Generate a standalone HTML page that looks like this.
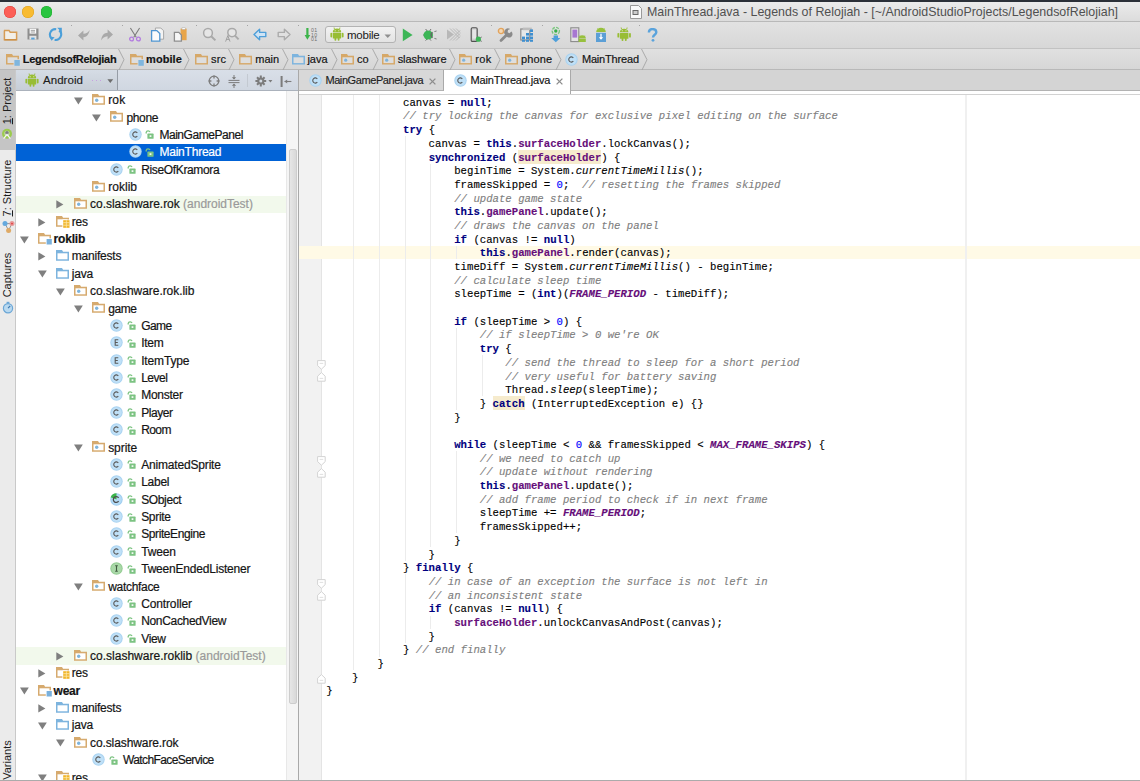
<!DOCTYPE html><html><head><meta charset="utf-8"><title>MainThread.java</title><style>
*{box-sizing:border-box}
html,body{margin:0;padding:0}
body{width:1140px;height:781px;overflow:hidden;position:relative;background:#e9e9e9;font-family:"Liberation Sans",sans-serif;color:#000}
.abs{position:absolute}
#band{left:0;top:0;width:1140px;height:2px;background:#2b3038}
#title{left:0;top:2px;width:1140px;height:20px;background:linear-gradient(#ebebeb,#dcdcdc);border-bottom:1px solid #b9b9b9}
#toolbar{left:0;top:22px;width:1140px;height:27px;background:linear-gradient(#e2e2e2,#d7d7d7);border-bottom:1px solid #c2c2c2}
#crumbs{left:0;top:49px;width:1140px;height:21px;background:linear-gradient(#e0e0e0,#d6d6d6);border-bottom:1px solid #b8b8b8}
.cr{position:absolute;top:0;height:20px;font-size:11px;line-height:20px;color:#1a1a1a;white-space:nowrap}
#strip{left:0;top:70px;width:16px;height:711px;background:#e6e6e6;border-right:1px solid #b5b5b5}
#proj{left:16px;top:70px;width:282px;height:711px;background:#fff}
#phead{left:16px;top:70px;width:282px;height:21px;background:linear-gradient(#d9dfe8,#d0d7e1);border-bottom:1px solid #abb2bc}
.tx{position:absolute;height:17.37px;font-size:12px;-webkit-text-stroke:0.2px currentColor;line-height:17.37px;white-space:nowrap;color:#141414}
.rbg{position:absolute;left:16px;width:270px;height:17.37px}
#vscroll{left:286px;top:91px;width:12px;height:690px;background:#f5f5f5;border-left:1px solid #e8e8e8}
#thumb{left:288.5px;top:149px;width:8.3px;height:554.5px;border-radius:2px;background:linear-gradient(90deg,#e6e6e6,#d9d9d9);border:1px solid #cdcdcd}
#sepline{left:298px;top:70px;width:1px;height:711px;background:#a9a9a9}
#editor{left:299px;top:70px;width:841px;height:711px;background:#fff}
#tabs{left:299px;top:70px;width:841px;height:21px;background:#d3d3d3;border-bottom:1px solid #b2b2b2}
.tab{position:absolute;top:70px;height:21px;font-size:11px;line-height:21px;color:#222;white-space:nowrap}
#gutter{left:299px;top:95px;width:23px;height:686px;background:#f2f2f2;border-right:1px solid #e4e4e4}
.cl{position:absolute;left:326.3px;height:13.67px;font-family:"Liberation Mono",monospace;font-size:10.675px;line-height:13.69px;white-space:pre;color:#000;-webkit-text-stroke:0.12px currentColor}
.k{color:#000080;font-weight:bold}
.f{color:#660e7a;font-weight:bold}
.sf{color:#660e7a;font-weight:bold;font-style:italic}
.n{color:#0000ff}
.c{color:#808080;font-style:italic}
.i{font-style:italic}
.hl{background:#f6ebcd;padding:2px 0 0 0}
.ig{position:absolute;width:1px;background:#ececec}
</style></head><body>
<div id="band" class="abs"></div>
<div id="title" class="abs"></div>
<div class="abs" style="left:4.35px;top:6.05px;width:11.5px;height:11.5px;border-radius:50%;background:#fc5f57;box-shadow:inset 0 0 0 0.5px #e0443e"></div>
<div class="abs" style="left:22.45px;top:6.05px;width:11.5px;height:11.5px;border-radius:50%;background:#f8bb31;box-shadow:inset 0 0 0 0.5px #dea123"></div>
<div class="abs" style="left:40.75px;top:6.05px;width:11.5px;height:11.5px;border-radius:50%;background:#29c540;box-shadow:inset 0 0 0 0.5px #1dad2b"></div>
<svg class="abs" style="left:630px;top:5px" width="12" height="14" viewBox="0 0 12 14" ><path d="M0.5 0.5h8l3 3v10h-11z" fill="#fafafa" stroke="#9a9a9a"/><rect x="2.5" y="5" width="6" height="5" fill="#6a6a6a"/><rect x="3.5" y="6" width="4" height="3" fill="#ccc"/></svg>
<div class="abs" id="f1" style="left:647px;top:3px;height:19px;line-height:19px;font-size:12.4px;color:#505050;white-space:nowrap;letter-spacing:0.011px;">MainThread.java - Legends of Relojiah - [~/AndroidStudioProjects/LegendsofRelojiah]</div>
<div id="toolbar" class="abs"></div>
<svg class="abs" style="left:3px;top:28px" width="15" height="13" viewBox="0 0 15 13" ><path d="M1.4 3.4V11.8H13.6V4.2H7.2L6 2.4H1.6Z" fill="#f2efe8" stroke="#d69c55" stroke-width="1.5"/><path d="M1.4 11.8H13.6" stroke="#c98c45" stroke-width="1.2"/></svg>
<svg class="abs" style="left:27px;top:28px" width="12" height="12" viewBox="0 0 12 12" ><path d="M0.5 0.5H11.5V11.5H0.5Z" fill="#8e8e8e"/><rect x="2.6" y="0.8" width="6.6" height="4.8" fill="#fafafa"/><path d="M3.8 2.4H8M3.8 4H8" stroke="#8e8e8e" stroke-width="0.8"/><rect x="2.4" y="7.8" width="7" height="3.7" fill="#e2e2e2"/><rect x="4.2" y="9.6" width="3.4" height="1.9" fill="#58a2d9"/></svg>
<svg class="abs" style="left:48px;top:27px" width="15" height="15" viewBox="0 0 15 15" ><path d="M8.2 2.2A5.4 5.4 0 0 0 3.6 11.4" fill="none" stroke="#4b9fd9" stroke-width="2.1"/><path d="M1.2 9.4L3.6 13.8L6.6 10.2Z" fill="#4b9fd9"/><path d="M6.6 12.8A5.4 5.4 0 0 0 11.2 3.4" fill="none" stroke="#4b9fd9" stroke-width="2.1"/><path d="M9.2 0.8H13.8V5.4Z" fill="#4b9fd9"/></svg>
<div class="abs" style="left:70.5px;top:25px;width:1.4px;height:1.4px;background:#8a8a8a;opacity:.7"></div>
<svg class="abs" style="left:77px;top:29px" width="14" height="12" viewBox="0 0 14 12" ><path d="M6.4 1.4L1 6.6L6.4 11.6V8.2C9.6 8 11.4 6 12.8 1C11.2 3.4 9.4 4.6 6.4 4.8Z" fill="#a9a9a9"/></svg>
<svg class="abs" style="left:99.5px;top:29px" width="14" height="12" viewBox="0 0 14 12" ><path d="M7.6 0.4L13 5.4L7.6 10.6V7.2C4.4 7.4 2.6 9 1.2 11.4C1.6 6.6 3.8 4 7.6 3.8Z" fill="#a9a9a9"/></svg>
<div class="abs" style="left:121.7px;top:25px;width:1.4px;height:1.4px;background:#8a8a8a;opacity:.7"></div>
<svg class="abs" style="left:128px;top:27px" width="14" height="15" viewBox="0 0 14 15" ><path d="M2.4 1L8.2 10.2M11.6 1L5.8 10.2" stroke="#7c7c7c" stroke-width="1.1"/><circle cx="3.6" cy="12" r="1.9" fill="none" stroke="#b27ae0" stroke-width="1.3"/><circle cx="10.4" cy="12" r="1.9" fill="none" stroke="#b27ae0" stroke-width="1.3"/></svg>
<svg class="abs" style="left:150px;top:27px" width="15" height="15" viewBox="0 0 15 15" ><path d="M5.4 1H10.8L13.6 3.8V12.2H5.4Z" fill="#f4f4f4" stroke="#a8a8a8" stroke-width="1"/><path d="M1.6 3.6H6.8L9.8 6.6V14.2H1.6Z" fill="#fbfbfb" stroke="#4f95d1" stroke-width="1.3"/></svg>
<svg class="abs" style="left:173px;top:27px" width="15" height="15" viewBox="0 0 15 15" ><rect x="7.6" y="1.6" width="6" height="11.6" fill="#e8a54a"/><rect x="9" y="0.8" width="3.2" height="1.6" fill="#fff" stroke="#aaa" stroke-width="0.5"/><path d="M1.4 5.4H5.8L8.4 8V14.2H1.4Z" fill="#f6f6f6" stroke="#8d8d8d" stroke-width="1.3"/></svg>
<div class="abs" style="left:196px;top:25px;width:1.4px;height:1.4px;background:#8a8a8a;opacity:.7"></div>
<svg class="abs" style="left:202px;top:27px" width="15" height="15" viewBox="0 0 15 15" ><circle cx="6" cy="6" r="4.4" fill="#e6e6e6" stroke="#a9a9a9" stroke-width="1.5"/><path d="M9.2 9.2L13.4 13.4" stroke="#a9a9a9" stroke-width="2"/></svg>
<svg class="abs" style="left:224px;top:27px" width="16" height="16" viewBox="0 0 16 16" ><circle cx="8" cy="5.6" r="4.2" fill="#e6e6e6" stroke="#a9a9a9" stroke-width="1.5"/><path d="M11 8.6L14.6 12.4" stroke="#a9a9a9" stroke-width="1.9"/><path d="M1.6 14.6L3.8 8.6L6 14.6M2.4 12.4H5.2" fill="none" stroke="#9a9a9a" stroke-width="0.9"/></svg>
<div class="abs" style="left:247px;top:25px;width:1.4px;height:1.4px;background:#8a8a8a;opacity:.7"></div>
<svg class="abs" style="left:253px;top:28px" width="14" height="13" viewBox="0 0 14 13" ><path d="M1 6.5L6.6 1.2V4.4H12.8V8.6H6.6V11.8Z" fill="#cfe4f5" stroke="#4e9fd9" stroke-width="1.4" stroke-linejoin="round"/></svg>
<svg class="abs" style="left:277px;top:28px" width="14" height="13" viewBox="0 0 14 13" ><path d="M13 6.5L7.4 1.2V4.4H1.2V8.6H7.4V11.8Z" fill="#e0e0e0" stroke="#ababab" stroke-width="1.4" stroke-linejoin="round"/></svg>
<div class="abs" style="left:298px;top:25px;width:1.4px;height:1.4px;background:#8a8a8a;opacity:.7"></div>
<svg class="abs" style="left:304px;top:27px" width="15" height="15" viewBox="0 0 15 15" ><path d="M3.4 1V8.6" stroke="#3cb44a" stroke-width="2.2"/><path d="M0.6 8L3.4 12.8L6.2 8Z" fill="#3cb44a"/><text x="7" y="5" font-family="Liberation Sans" font-size="5.2" fill="#6f6f6f" letter-spacing="0.3">01</text><text x="7" y="9.6" font-family="Liberation Sans" font-size="5.2" fill="#6f6f6f" letter-spacing="0.3">10</text><text x="7" y="14.2" font-family="Liberation Sans" font-size="5.2" fill="#6f6f6f" letter-spacing="0.3">01</text></svg>
<div class="abs" style="left:325.3px;top:26.3px;width:71px;height:17px;border-radius:3px;border:1px solid #b3b3b3;background:linear-gradient(#f2f2f2,#e3e3e3)"></div>
<svg class="abs" style="left:329.5px;top:27.3px" width="14" height="14" viewBox="0 0 14 14" ><g transform="scale(1.0)" fill="#98bd34"><path d="M2.8 5.2C2.8 2.8 4.6 1.6 7 1.6C9.4 1.6 11.2 2.8 11.2 5.2Z"/><path d="M4.4 2L4.1 0.5M9.6 2L9.9 0.5" stroke="#98bd34" stroke-width="0.9"/><rect x="2.8" y="5.8" width="8.4" height="5.8" rx="0.5"/><rect x="0.4" y="5.8" width="1.8" height="4.6" rx="0.9"/><rect x="11.8" y="5.8" width="1.8" height="4.6" rx="0.9"/><rect x="4.5" y="10.6" width="1.8" height="3.2" rx="0.8"/><rect x="7.7" y="10.6" width="1.8" height="3.2" rx="0.8"/><circle cx="5.2" cy="3.7" r="0.55" fill="#eef4dc"/><circle cx="8.8" cy="3.7" r="0.55" fill="#eef4dc"/></g></svg>
<div class="abs" id="f2" style="left:347px;top:26.5px;height:17px;line-height:17px;font-size:11.5px;color:#1a1a1a;letter-spacing:-0.232px;">mobile</div>
<svg class="abs" style="left:384px;top:33.5px" width="8" height="6" viewBox="0 0 8 6" ><path d="M0.5 0.5H7L3.75 4Z" fill="#8f8f8f"/></svg>
<svg class="abs" style="left:402px;top:28px" width="11" height="14" viewBox="0 0 11 14" ><path d="M0.8 0.6V13.2L10.6 6.9Z" fill="#3db657"/></svg>
<svg class="abs" style="left:422px;top:27px" width="16" height="16" viewBox="0 0 16 16" ><path d="M3.6 2L5.2 4M9 2L7.6 4M1 8H3M3.6 13.6L5 12M9 13.6L7.6 12" stroke="#555" stroke-width="0.8"/><path d="M6.6 3.4A5 4.6 0 1 0 6.6 12.8A6 6 0 0 1 6.6 3.4Z" fill="#3db657"/><circle cx="6.8" cy="8" r="4.2" fill="#3db657"/><path d="M10.6 5.4A3 3 0 0 0 10.6 10.6" fill="none" stroke="#666" stroke-width="1.4"/><path d="M12.4 4.6L14.6 4M12.4 11.4L14.6 12" stroke="#666" stroke-width="0.8"/></svg>
<svg class="abs" style="left:446px;top:27px" width="15" height="15" viewBox="0 0 15 15" ><path d="M1 2.5V12.5L8 7.5Z" fill="#b8b8b8"/><g stroke="#b3b3b3" stroke-width="0.9" fill="none"><path d="M4 1.5L13.5 11M7 1.5L14 8.5M10 1.5L14 5.5M4 13.5L14 3.5M7 13.5L14 6.5M10 13.5L14 9.5"/></g></svg>
<svg class="abs" style="left:470px;top:27px" width="13" height="16" viewBox="0 0 13 16" ><rect x="1.2" y="0.8" width="6" height="13.6" rx="1.2" fill="#cfcfcf" stroke="#505050" stroke-width="1.1"/><rect x="2.4" y="2.6" width="3.6" height="9" fill="#e6e6e6"/><circle cx="8.4" cy="12.2" r="2.6" fill="#3db657"/><path d="M10.4 10.6L11.8 10M10.4 13.8L11.8 14.4" stroke="#555" stroke-width="0.7"/></svg>
<div class="abs" style="left:491px;top:25px;width:1.4px;height:1.4px;background:#8a8a8a;opacity:.7"></div>
<svg class="abs" style="left:497px;top:27px" width="16" height="16" viewBox="0 0 16 16" ><path d="M4 13.6L9.6 8" stroke="#8a8a8a" stroke-width="2.8" stroke-linecap="round"/><path d="M9 8.4A3.4 3.4 0 1 0 14.4 4.6L12.4 6.2L10.6 5.2L11 3L13.2 2A3.4 3.4 0 0 0 9 8.4Z" fill="#8a8a8a"/><circle cx="4" cy="4" r="2.6" fill="#f5d9b5" stroke="#e2a35c" stroke-width="1.4"/></svg>
<svg class="abs" style="left:520px;top:27px" width="16" height="16" viewBox="0 0 16 16" ><rect x="0.8" y="2" width="9" height="11" fill="#e8e8e8" stroke="#8a8a8a" stroke-width="1.2"/><rect x="2.8" y="0.6" width="9" height="2.6" fill="#bdbdbd"/><g fill="#3f8fd0"><rect x="6" y="6" width="3" height="2.6"/><rect x="10" y="6" width="3" height="2.6"/><rect x="6" y="9.6" width="3" height="2.6"/><rect x="10" y="9.6" width="3" height="2.6"/><rect x="2" y="9.6" width="3" height="2.6"/><rect x="10" y="2.4" width="3" height="2.6"/><rect x="6" y="12.8" width="3" height="2"/><rect x="10" y="12.8" width="3" height="2"/><rect x="2" y="12.8" width="3" height="2"/></g></svg>
<div class="abs" style="left:542px;top:25px;width:1.4px;height:1.4px;background:#8a8a8a;opacity:.7"></div>
<svg class="abs" style="left:549px;top:26px" width="14" height="17" viewBox="0 0 14 17" ><circle cx="6.8" cy="5" r="3.6" fill="none" stroke="#7bc77f" stroke-width="1.4" stroke-dasharray="3 1.2"/><circle cx="6.8" cy="5" r="1.7" fill="#35b04a"/><path d="M4.6 9.4H9V12H11.4L6.8 16.2L2.2 12H4.6Z" fill="#4d9fda"/></svg>
<svg class="abs" style="left:570px;top:27px" width="17" height="16" viewBox="0 0 17 16" ><rect x="0.8" y="0.8" width="8" height="13.8" fill="#e4e4e4" stroke="#8a8a8a" stroke-width="1.1"/><rect x="2.4" y="2.6" width="4.8" height="8" fill="#a777d1"/><g fill="#97c03d"><path d="M8.6 11.2A3.6 3 0 0 1 15.8 11.2Z"/><rect x="8.6" y="11.6" width="7.2" height="3.4"/></g><path d="M9.6 8.6L10.4 9.6M14.8 8.6L14 9.6" stroke="#97c03d" stroke-width="0.7"/></svg>
<svg class="abs" style="left:595px;top:27px" width="12" height="16" viewBox="0 0 12 16" ><g fill="#97c03d"><path d="M1.2 5A4.8 4.2 0 0 1 10.8 5Z"/></g><path d="M2.4 1.2L3.2 2.2M9.6 1.2L8.8 2.2" stroke="#97c03d" stroke-width="0.7"/><rect x="1" y="5.8" width="10" height="9.2" fill="#5b9fd6"/><path d="M6 6.8V12" stroke="#fff" stroke-width="1.3"/><path d="M3.8 10.2L6 12.8L8.2 10.2Z" fill="#fff"/></svg>
<svg class="abs" style="left:616.5px;top:26.6px" width="15" height="15" viewBox="0 0 15 15" ><g transform="scale(1.02)" fill="#98bd34"><path d="M2.8 5.2C2.8 2.8 4.6 1.6 7 1.6C9.4 1.6 11.2 2.8 11.2 5.2Z"/><path d="M4.4 2L4.1 0.5M9.6 2L9.9 0.5" stroke="#98bd34" stroke-width="0.9"/><rect x="2.8" y="5.8" width="8.4" height="5.8" rx="0.5"/><rect x="0.4" y="5.8" width="1.8" height="4.6" rx="0.9"/><rect x="11.8" y="5.8" width="1.8" height="4.6" rx="0.9"/><rect x="4.5" y="10.6" width="1.8" height="3.2" rx="0.8"/><rect x="7.7" y="10.6" width="1.8" height="3.2" rx="0.8"/><circle cx="5.2" cy="3.7" r="0.55" fill="#eef4dc"/><circle cx="8.8" cy="3.7" r="0.55" fill="#eef4dc"/></g></svg>
<div class="abs" style="left:639px;top:25px;width:1.4px;height:1.4px;background:#8a8a8a;opacity:.7"></div>
<svg class="abs" style="left:646.5px;top:27.5px" width="11" height="14" viewBox="0 0 11 14" ><path d="M1.9 4.4C1.9 2.1 3.5 1.1 5.5 1.1C7.7 1.1 9.3 2.3 9.3 4.3C9.3 6.7 6 6.9 6 9.4" fill="none" stroke="#5aa3dc" stroke-width="2.4"/><circle cx="6" cy="12.3" r="1.4" fill="#5aa3dc"/></svg>
<div id="crumbs" class="abs"></div>
<svg class="abs" style="left:6.3px;top:54.1px" width="15" height="12" viewBox="0 0 15 12" ><path d="M0 0H6L7.1 1.8H13V10.6H0Z" fill="#d6a868"/><path d="M1.5 3.3H11.5V9.1H1.5Z" fill="#dedede"/><rect x="7.6" y="5.2" width="7" height="6.8" fill="#dcdcdc"/><rect x="8.4" y="6" width="5.4" height="5.8" fill="#7fb6de"/></svg>
<div class="abs" id="f3" style="left:22.7px;top:49px;height:20px;line-height:20px;font-size:11px;color:#141414;white-space:nowrap;-webkit-text-stroke:0.18px currentColor;font-weight:bold;letter-spacing:-0.277px;">LegendsofRelojiah</div>
<svg class="abs" style="left:118.3px;top:49px" width="8" height="21" viewBox="0 0 8 21" ><path d="M0.5 0L6 10.7L1 21" fill="none" stroke="#a5a5a5" stroke-width="0.9"/></svg>
<svg class="abs" style="left:129.7px;top:54.1px" width="15" height="12" viewBox="0 0 15 12" ><path d="M0 0H6L7.1 1.8H13V10.6H0Z" fill="#d6a868"/><path d="M1.5 3.3H11.5V9.1H1.5Z" fill="#dedede"/><rect x="7.6" y="5.2" width="7" height="6.8" fill="#dcdcdc"/><rect x="8.4" y="6" width="5.4" height="5.8" fill="#7fb6de"/></svg>
<div class="abs" id="f4" style="left:146.1px;top:49px;height:20px;line-height:20px;font-size:11px;color:#141414;white-space:nowrap;-webkit-text-stroke:0.18px currentColor;font-weight:bold;letter-spacing:0.058px;">mobile</div>
<svg class="abs" style="left:183.4px;top:49px" width="8" height="21" viewBox="0 0 8 21" ><path d="M0.5 0L6 10.7L1 21" fill="none" stroke="#a5a5a5" stroke-width="0.9"/></svg>
<svg class="abs" style="left:194.7px;top:54.1px" width="15" height="12" viewBox="0 0 15 12" ><path d="M0 0H6L7.1 1.8H13V10.6H0Z" fill="#d6a868"/><path d="M1.5 3.3H11.5V9.1H1.5Z" fill="#dedede"/></svg>
<div class="abs" id="f5" style="left:211.1px;top:49px;height:20px;line-height:20px;font-size:11px;color:#141414;white-space:nowrap;-webkit-text-stroke:0.18px currentColor;letter-spacing:0.076px;">src</div>
<svg class="abs" style="left:228.1px;top:49px" width="8" height="21" viewBox="0 0 8 21" ><path d="M0.5 0L6 10.7L1 21" fill="none" stroke="#a5a5a5" stroke-width="0.9"/></svg>
<svg class="abs" style="left:239px;top:54.1px" width="15" height="12" viewBox="0 0 15 12" ><path d="M0 0H6L7.1 1.8H13V10.6H0Z" fill="#d6a868"/><path d="M1.5 3.3H11.5V9.1H1.5Z" fill="#dedede"/></svg>
<div class="abs" id="f6" style="left:255.20000000000002px;top:49px;height:20px;line-height:20px;font-size:11px;color:#141414;white-space:nowrap;-webkit-text-stroke:0.18px currentColor;letter-spacing:0.039px;">main</div>
<svg class="abs" style="left:281.8px;top:49px" width="8" height="21" viewBox="0 0 8 21" ><path d="M0.5 0L6 10.7L1 21" fill="none" stroke="#a5a5a5" stroke-width="0.9"/></svg>
<svg class="abs" style="left:292.2px;top:54.1px" width="15" height="12" viewBox="0 0 15 12" ><path d="M0 0H6L7.1 1.8H13V10.6H0Z" fill="#7db4de"/><path d="M1.5 3.3H11.5V9.1H1.5Z" fill="#dedede"/></svg>
<div class="abs" id="f7" style="left:307.4px;top:49px;height:20px;line-height:20px;font-size:11px;color:#141414;white-space:nowrap;-webkit-text-stroke:0.18px currentColor;letter-spacing:0.028px;">java</div>
<svg class="abs" style="left:330.5px;top:49px" width="8" height="21" viewBox="0 0 8 21" ><path d="M0.5 0L6 10.7L1 21" fill="none" stroke="#a5a5a5" stroke-width="0.9"/></svg>
<svg class="abs" style="left:340.8px;top:54.1px" width="15" height="12" viewBox="0 0 15 12" ><path d="M0 0H6L7.1 1.8H13V10.6H0Z" fill="#d6a868"/><path d="M1.5 3.3H11.5V9.1H1.5Z" fill="#dedede"/><circle cx="4.7" cy="6.2" r="1.6" fill="#7fb4dc"/></svg>
<div class="abs" id="f8" style="left:356.9px;top:49px;height:20px;line-height:20px;font-size:11px;color:#141414;white-space:nowrap;-webkit-text-stroke:0.18px currentColor;letter-spacing:-0.012px;">co</div>
<svg class="abs" style="left:371.5px;top:49px" width="8" height="21" viewBox="0 0 8 21" ><path d="M0.5 0L6 10.7L1 21" fill="none" stroke="#a5a5a5" stroke-width="0.9"/></svg>
<svg class="abs" style="left:381.7px;top:54.1px" width="15" height="12" viewBox="0 0 15 12" ><path d="M0 0H6L7.1 1.8H13V10.6H0Z" fill="#d6a868"/><path d="M1.5 3.3H11.5V9.1H1.5Z" fill="#dedede"/><circle cx="4.7" cy="6.2" r="1.6" fill="#7fb4dc"/></svg>
<div class="abs" id="f9" style="left:397.7px;top:49px;height:20px;line-height:20px;font-size:11px;color:#141414;white-space:nowrap;-webkit-text-stroke:0.18px currentColor;letter-spacing:-0.081px;">slashware</div>
<svg class="abs" style="left:448.7px;top:49px" width="8" height="21" viewBox="0 0 8 21" ><path d="M0.5 0L6 10.7L1 21" fill="none" stroke="#a5a5a5" stroke-width="0.9"/></svg>
<svg class="abs" style="left:459.2px;top:54.1px" width="15" height="12" viewBox="0 0 15 12" ><path d="M0 0H6L7.1 1.8H13V10.6H0Z" fill="#d6a868"/><path d="M1.5 3.3H11.5V9.1H1.5Z" fill="#dedede"/><circle cx="4.7" cy="6.2" r="1.6" fill="#7fb4dc"/></svg>
<div class="abs" id="f10" style="left:475.2px;top:49px;height:20px;line-height:20px;font-size:11px;color:#141414;white-space:nowrap;-webkit-text-stroke:0.18px currentColor;letter-spacing:0.350px;">rok</div>
<svg class="abs" style="left:494.0px;top:49px" width="8" height="21" viewBox="0 0 8 21" ><path d="M0.5 0L6 10.7L1 21" fill="none" stroke="#a5a5a5" stroke-width="0.9"/></svg>
<svg class="abs" style="left:505.2px;top:54.1px" width="15" height="12" viewBox="0 0 15 12" ><path d="M0 0H6L7.1 1.8H13V10.6H0Z" fill="#d6a868"/><path d="M1.5 3.3H11.5V9.1H1.5Z" fill="#dedede"/><circle cx="4.7" cy="6.2" r="1.6" fill="#7fb4dc"/></svg>
<div class="abs" id="f11" style="left:521.1px;top:49px;height:20px;line-height:20px;font-size:11px;color:#141414;white-space:nowrap;-webkit-text-stroke:0.18px currentColor;letter-spacing:0.101px;">phone</div>
<svg class="abs" style="left:554.6px;top:49px" width="8" height="21" viewBox="0 0 8 21" ><path d="M0.5 0L6 10.7L1 21" fill="none" stroke="#a5a5a5" stroke-width="0.9"/></svg>
<svg class="abs" style="left:565.2px;top:52.8px" width="13" height="13" viewBox="0 0 13 13" ><circle cx="6.5" cy="6.5" r="6.2" fill="#a9d3f1"/><circle cx="6.5" cy="6.5" r="5.2" fill="#bfe0f7"/><path d="M8.3 5A2.5 2.6 0 1 0 8.3 8" fill="none" stroke="#5a5a5a" stroke-width="1.1"/></svg>
<div class="abs" id="f12" style="left:581.9px;top:49px;height:20px;line-height:20px;font-size:11px;color:#141414;white-space:nowrap;-webkit-text-stroke:0.18px currentColor;letter-spacing:-0.170px;">MainThread</div>
<svg class="abs" style="left:641.0px;top:49px" width="8" height="21" viewBox="0 0 8 21" ><path d="M0.5 0L6 10.7L1 21" fill="none" stroke="#a5a5a5" stroke-width="0.9"/></svg>
<div class="abs" style="left:0;top:70px;width:16px;height:711px;background:#ebebeb;border-right:1px solid #c9c9c9"></div>
<div class="abs" style="left:0;top:70px;width:15px;height:80px;background:#c5c5c5"></div>
<div class="abs" style="left:-22.8px;top:94.7px;width:60px;height:12px;line-height:12px;font-size:11px;color:#1c1c1c;text-align:center;white-space:nowrap;transform:rotate(-90deg);transform-origin:50% 50%"><u>1</u>: Project</div>
<svg class="abs" style="left:1.2px;top:127.5px" width="12" height="12" viewBox="0 0 12 12" ><circle cx="6" cy="5.8" r="5" fill="#9ccb4e"/><circle cx="6" cy="5.4" r="2.6" fill="#c9dcb4"/><circle cx="6" cy="4.8" r="1.8" fill="#808080"/><path d="M2.6 10.6L6 6.6L9.4 10.6" stroke="#f4f4f4" stroke-width="1.3" fill="none"/></svg>
<div class="abs" style="left:-23.8px;top:182.0px;width:62px;height:12px;line-height:12px;font-size:11px;color:#1c1c1c;text-align:center;white-space:nowrap;transform:rotate(-90deg);transform-origin:50% 50%"><u>7</u>: Structure</div>
<svg class="abs" style="left:1.5px;top:219.5px" width="13" height="14" viewBox="0 0 13 14" ><path d="M3 3.6L10 3.6L6.6 10.4Z" fill="none" stroke="#8a8a8a" stroke-width="0.9"/><circle cx="3" cy="3.6" r="2.5" fill="#64a9de"/><circle cx="10" cy="3.6" r="2.5" fill="#e79a9a"/><circle cx="10" cy="3.6" r="0.9" fill="#e23b3b"/><circle cx="6.6" cy="10.4" r="2.5" fill="#dfaa66"/></svg>
<div class="abs" style="left:-17.8px;top:269.0px;width:50px;height:12px;line-height:12px;font-size:11px;color:#1c1c1c;text-align:center;white-space:nowrap;transform:rotate(-90deg);transform-origin:50% 50%">Captures</div>
<svg class="abs" style="left:1.5px;top:301px" width="12" height="13" viewBox="0 0 12 13" ><circle cx="6" cy="7.2" r="4.6" fill="#b9d9f0" stroke="#6aa6d6" stroke-width="1.2"/><path d="M6 7.2L8.2 5" stroke="#3c78b0" stroke-width="1.1"/><rect x="4.6" y="0.8" width="2.8" height="1.6" fill="#6aa6d6"/></svg>
<div class="abs" style="left:-15.8px;top:754.0px;width:46px;height:12px;line-height:12px;font-size:11px;color:#1c1c1c;text-align:center;white-space:nowrap;transform:rotate(-90deg);transform-origin:50% 50%">Variants</div>
<div id="proj" class="abs"></div>
<div id="phead" class="abs"></div>
<div class="abs" style="left:16px;top:70px;width:102px;height:20px;background:linear-gradient(#d5dce5,#c7ced7);border-right:1px solid #969da6"></div>
<svg class="abs" style="left:24.5px;top:72.8px" width="14" height="14" viewBox="0 0 14 14" ><g transform="scale(1.0)" fill="#98bd34"><path d="M2.8 5.2C2.8 2.8 4.6 1.6 7 1.6C9.4 1.6 11.2 2.8 11.2 5.2Z"/><path d="M4.4 2L4.1 0.5M9.6 2L9.9 0.5" stroke="#98bd34" stroke-width="0.9"/><rect x="2.8" y="5.8" width="8.4" height="5.8" rx="0.5"/><rect x="0.4" y="5.8" width="1.8" height="4.6" rx="0.9"/><rect x="11.8" y="5.8" width="1.8" height="4.6" rx="0.9"/><rect x="4.5" y="10.6" width="1.8" height="3.2" rx="0.8"/><rect x="7.7" y="10.6" width="1.8" height="3.2" rx="0.8"/><circle cx="5.2" cy="3.7" r="0.55" fill="#eef4dc"/><circle cx="8.8" cy="3.7" r="0.55" fill="#eef4dc"/></g></svg>
<div class="abs" id="f13" style="left:43px;top:70px;height:20px;line-height:20px;font-size:11.5px;color:#1c1c1c;-webkit-text-stroke:0.15px currentColor;letter-spacing:0.051px;">Android</div>
<div class="abs" style="left:92px;top:79.8px;width:1px;height:1px;background:#c7a0e0"></div>
<div class="abs" style="left:96px;top:79.8px;width:1px;height:1px;background:#c7a0e0"></div>
<div class="abs" style="left:100px;top:79.8px;width:1px;height:1px;background:#c7a0e0"></div>
<svg class="abs" style="left:107px;top:79px" width="8" height="5" viewBox="0 0 8 5" ><path d="M0.4 0.3H6.2L3.3 3.9Z" fill="#6d6d6d"/></svg>
<svg class="abs" style="left:207.5px;top:74.5px" width="12" height="12" viewBox="0 0 12 12" ><circle cx="6" cy="6" r="4.8" fill="none" stroke="#7c7c7c" stroke-width="1.3"/><path d="M6 0.6V3.4M6 8.6V11.4M0.6 6H3.4M8.6 6H11.4" stroke="#7c7c7c" stroke-width="1.3"/></svg>
<svg class="abs" style="left:227.5px;top:74.5px" width="12" height="13" viewBox="0 0 12 13" ><path d="M0.5 5.4H11.5M0.5 7.6H11.5" stroke="#7c7c7c" stroke-width="1"/><path d="M6 0V4M6 9V13" stroke="#7c7c7c" stroke-width="1"/><path d="M3.8 2.2L6 4.6L8.2 2.2ZM3.8 10.8L6 8.4L8.2 10.8Z" fill="#7c7c7c"/></svg>
<div class="abs" style="left:246.5px;top:74px;width:1px;height:13px;background:#c3c9d1"></div>
<svg class="abs" style="left:254.5px;top:74.5px" width="19" height="12" viewBox="0 0 19 12" ><g transform="translate(5.8 6)"><circle r="3.6" fill="#7c7c7c"/><g stroke="#7c7c7c" stroke-width="2"><path d="M0 -5.4V5.4M-5.4 0H5.4M-3.8 -3.8L3.8 3.8M-3.8 3.8L3.8 -3.8"/></g><circle r="1.5" fill="#d4dbe4"/></g><path d="M13.4 5H17.4L15.4 7.6Z" fill="#7c7c7c"/></svg>
<svg class="abs" style="left:280px;top:74.5px" width="12" height="13" viewBox="0 0 12 13" ><rect x="0.6" y="1" width="2" height="11" fill="#7c7c7c"/><path d="M4.6 6.5H11.4" stroke="#7c7c7c" stroke-width="1.1"/><path d="M4.4 6.5L7.2 4.4V8.6Z" fill="#7c7c7c"/></svg>
<svg class="abs" style="left:74.2px;top:96.6px" width="9" height="8" viewBox="0 0 9 8" ><path d="M0 0.5H8.8L4.4 7.5z" fill="#7f7f7f"/></svg>
<svg class="abs" style="left:92.2px;top:94.0px" width="13" height="11" viewBox="0 0 13 11" ><path d="M0 0H6L7.1 1.8H13V10.8H0Z" fill="#d6aa6e"/><path d="M1.5 3.3H11.5V9.3H1.5Z" fill="#fff"/><circle cx="4.7" cy="6.3" r="1.7" fill="#7fb4dc"/></svg>
<div class="tx" id="f14" style="left:108.2px;top:92.15px;color:#141414;letter-spacing:0.143px;">rok</div>
<svg class="abs" style="left:92.4px;top:114.0px" width="9" height="8" viewBox="0 0 9 8" ><path d="M0 0.5H8.8L4.4 7.5z" fill="#7f7f7f"/></svg>
<svg class="abs" style="left:110.4px;top:111.4px" width="13" height="11" viewBox="0 0 13 11" ><path d="M0 0H6L7.1 1.8H13V10.8H0Z" fill="#d6aa6e"/><path d="M1.5 3.3H11.5V9.3H1.5Z" fill="#fff"/><circle cx="4.7" cy="6.3" r="1.7" fill="#7fb4dc"/></svg>
<div class="tx" id="f15" style="left:126.4px;top:109.52px;color:#141414;letter-spacing:-0.315px;">phone</div>
<svg class="abs" style="left:128.6px;top:127.7px" width="13" height="13" viewBox="0 0 13 13" ><circle cx="6.5" cy="6.5" r="6.2" fill="#a9d3f1"/><circle cx="6.5" cy="6.5" r="5.2" fill="#bfe0f7"/><path d="M8.3 5A2.5 2.6 0 1 0 8.3 8" fill="none" stroke="#5a5a5a" stroke-width="1.1"/></svg>
<svg class="abs" style="left:145.1px;top:130.3px" width="9" height="9" viewBox="0 0 9 9" ><path d="M1.2 3.6V2.4A2 2 0 0 1 5 2.1" fill="none" stroke="#7cc382" stroke-width="1.3"/><rect x="2.4" y="3.6" width="6.2" height="5.2" rx="0.6" fill="#7cc382"/><rect x="4.6" y="5.3" width="1.8" height="1.6" fill="#fff"/></svg>
<div class="tx" id="f16" style="left:159.4px;top:126.89px;color:#141414;letter-spacing:-0.453px;">MainGamePanel</div>
<div class="rbg" style="top:143.51px;background:#0062d6"></div>
<svg class="abs" style="left:128.6px;top:145.1px" width="13" height="13" viewBox="0 0 13 13" ><circle cx="6.5" cy="6.5" r="6.2" fill="#a9d3f1"/><circle cx="6.5" cy="6.5" r="5.2" fill="#bfe0f7"/><path d="M8.3 5A2.5 2.6 0 1 0 8.3 8" fill="none" stroke="#5a5a5a" stroke-width="1.1"/></svg>
<svg class="abs" style="left:145.1px;top:147.7px" width="9" height="9" viewBox="0 0 9 9" ><path d="M1.2 3.6V2.4A2 2 0 0 1 5 2.1" fill="none" stroke="#7cc382" stroke-width="1.3"/><rect x="2.4" y="3.6" width="6.2" height="5.2" rx="0.6" fill="#7cc382"/><rect x="4.6" y="5.3" width="1.8" height="1.6" fill="#fff"/></svg>
<div class="tx" id="f17" style="left:159.4px;top:144.26px;color:#fff;letter-spacing:-0.213px;">MainThread</div>
<svg class="abs" style="left:110.4px;top:162.5px" width="13" height="13" viewBox="0 0 13 13" ><circle cx="6.5" cy="6.5" r="6.2" fill="#a9d3f1"/><circle cx="6.5" cy="6.5" r="5.2" fill="#bfe0f7"/><path d="M8.3 5A2.5 2.6 0 1 0 8.3 8" fill="none" stroke="#5a5a5a" stroke-width="1.1"/></svg>
<svg class="abs" style="left:126.9px;top:165.1px" width="9" height="9" viewBox="0 0 9 9" ><path d="M1.2 3.6V2.4A2 2 0 0 1 5 2.1" fill="none" stroke="#7cc382" stroke-width="1.3"/><rect x="2.4" y="3.6" width="6.2" height="5.2" rx="0.6" fill="#7cc382"/><rect x="4.6" y="5.3" width="1.8" height="1.6" fill="#fff"/></svg>
<div class="tx" id="f18" style="left:141.2px;top:161.63px;color:#141414;letter-spacing:-0.353px;">RiseOfKramora</div>
<svg class="abs" style="left:92.2px;top:180.8px" width="13" height="11" viewBox="0 0 13 11" ><path d="M0 0H6L7.1 1.8H13V10.8H0Z" fill="#d6aa6e"/><path d="M1.5 3.3H11.5V9.3H1.5Z" fill="#fff"/><circle cx="4.7" cy="6.3" r="1.7" fill="#7fb4dc"/></svg>
<div class="tx" id="f19" style="left:108.2px;top:179.00px;color:#141414;letter-spacing:0.035px;">roklib</div>
<div class="rbg" style="top:195.62px;background:#f2f9ec"></div>
<svg class="abs" style="left:56.3px;top:200.1px" width="8" height="9" viewBox="0 0 8 9" ><path d="M0.3 0.2V8.6L7.4 4.4z" fill="#7f7f7f"/></svg>
<svg class="abs" style="left:74.0px;top:198.2px" width="13" height="11" viewBox="0 0 13 11" ><path d="M0 0H6L7.1 1.8H13V10.8H0Z" fill="#d6aa6e"/><path d="M1.5 3.3H11.5V9.3H1.5Z" fill="#fff"/><circle cx="4.7" cy="6.3" r="1.7" fill="#7fb4dc"/></svg>
<div class="tx" id="f20" style="left:90.0px;top:196.37px;color:#141414;letter-spacing:-0.017px;">co.slashware.rok<span style="color:#9a9a9a"> (androidTest)</span></div>
<svg class="abs" style="left:38.1px;top:217.5px" width="8" height="9" viewBox="0 0 8 9" ><path d="M0.3 0.2V8.6L7.4 4.4z" fill="#7f7f7f"/></svg>
<svg class="abs" style="left:55.8px;top:215.6px" width="15" height="12" viewBox="0 0 15 12" ><path d="M0 0H6L7.1 1.8H13V10.8H0Z" fill="#d6aa6e"/><path d="M1.5 3.3H11.5V9.3H1.5Z" fill="#fff"/><rect x="6.4" y="3.5" width="8" height="8.5" fill="#fff"/><rect x="7.2" y="4.2" width="6.3" height="7.6" fill="#f0b52a"/><path d="M7.2 6.7H13.5M7.2 9.2H13.5" stroke="#fde9b0" stroke-width="0.8"/><path d="M10.35 4.2V11.8" stroke="#fde9b0" stroke-width="0.7"/></svg>
<div class="tx" id="f21" style="left:71.8px;top:213.74px;color:#141414;letter-spacing:-0.257px;">res</div>
<svg class="abs" style="left:19.6px;top:235.6px" width="9" height="8" viewBox="0 0 9 8" ><path d="M0 0.5H8.8L4.4 7.5z" fill="#7f7f7f"/></svg>
<svg class="abs" style="left:37.6px;top:233.0px" width="15" height="12" viewBox="0 0 15 12" ><path d="M0 0H6L7.1 1.8H13V10.8H0Z" fill="#d6aa6e"/><path d="M1.5 3.3H11.5V9.3H1.5Z" fill="#fff"/><rect x="7.8" y="5.3" width="7" height="6.7" fill="#fff"/><rect x="8.6" y="6" width="5.2" height="5.5" fill="#79b0dc"/></svg>
<div class="tx" id="f22" style="left:53.6px;top:231.11px;color:#141414;font-weight:bold;letter-spacing:-0.212px;">roklib</div>
<svg class="abs" style="left:38.1px;top:252.2px" width="8" height="9" viewBox="0 0 8 9" ><path d="M0.3 0.2V8.6L7.4 4.4z" fill="#7f7f7f"/></svg>
<svg class="abs" style="left:55.8px;top:250.3px" width="13" height="11" viewBox="0 0 13 11" ><path d="M0 0H6L7.1 1.8H13V10.8H0Z" fill="#7db4de"/><path d="M1.5 3.3H11.5V9.3H1.5Z" fill="#fff"/></svg>
<div class="tx" id="f23" style="left:71.8px;top:248.48px;color:#141414;letter-spacing:-0.207px;">manifests</div>
<svg class="abs" style="left:37.8px;top:270.3px" width="9" height="8" viewBox="0 0 9 8" ><path d="M0 0.5H8.8L4.4 7.5z" fill="#7f7f7f"/></svg>
<svg class="abs" style="left:55.8px;top:267.7px" width="13" height="11" viewBox="0 0 13 11" ><path d="M0 0H6L7.1 1.8H13V10.8H0Z" fill="#7db4de"/><path d="M1.5 3.3H11.5V9.3H1.5Z" fill="#fff"/></svg>
<div class="tx" id="f24" style="left:71.8px;top:265.85px;color:#141414;letter-spacing:-0.229px;">java</div>
<svg class="abs" style="left:56.0px;top:287.7px" width="9" height="8" viewBox="0 0 9 8" ><path d="M0 0.5H8.8L4.4 7.5z" fill="#7f7f7f"/></svg>
<svg class="abs" style="left:74.0px;top:285.1px" width="13" height="11" viewBox="0 0 13 11" ><path d="M0 0H6L7.1 1.8H13V10.8H0Z" fill="#d6aa6e"/><path d="M1.5 3.3H11.5V9.3H1.5Z" fill="#fff"/><circle cx="4.7" cy="6.3" r="1.7" fill="#7fb4dc"/></svg>
<div class="tx" id="f25" style="left:90.0px;top:283.22px;color:#141414;letter-spacing:-0.054px;">co.slashware.rok.lib</div>
<svg class="abs" style="left:74.2px;top:305.0px" width="9" height="8" viewBox="0 0 9 8" ><path d="M0 0.5H8.8L4.4 7.5z" fill="#7f7f7f"/></svg>
<svg class="abs" style="left:92.2px;top:302.4px" width="13" height="11" viewBox="0 0 13 11" ><path d="M0 0H6L7.1 1.8H13V10.8H0Z" fill="#d6aa6e"/><path d="M1.5 3.3H11.5V9.3H1.5Z" fill="#fff"/><circle cx="4.7" cy="6.3" r="1.7" fill="#7fb4dc"/></svg>
<div class="tx" id="f26" style="left:108.2px;top:300.59px;color:#141414;letter-spacing:-0.408px;">game</div>
<svg class="abs" style="left:110.4px;top:318.8px" width="13" height="13" viewBox="0 0 13 13" ><circle cx="6.5" cy="6.5" r="6.2" fill="#a9d3f1"/><circle cx="6.5" cy="6.5" r="5.2" fill="#bfe0f7"/><path d="M8.3 5A2.5 2.6 0 1 0 8.3 8" fill="none" stroke="#5a5a5a" stroke-width="1.1"/></svg>
<svg class="abs" style="left:126.9px;top:321.4px" width="9" height="9" viewBox="0 0 9 9" ><path d="M1.2 3.6V2.4A2 2 0 0 1 5 2.1" fill="none" stroke="#7cc382" stroke-width="1.3"/><rect x="2.4" y="3.6" width="6.2" height="5.2" rx="0.6" fill="#7cc382"/><rect x="4.6" y="5.3" width="1.8" height="1.6" fill="#fff"/></svg>
<div class="tx" id="f27" style="left:141.2px;top:317.96px;color:#141414;letter-spacing:-0.600px;">Game</div>
<svg class="abs" style="left:110.4px;top:336.2px" width="13" height="13" viewBox="0 0 13 13" ><circle cx="6.5" cy="6.5" r="6.2" fill="#a9d3f1"/><circle cx="6.5" cy="6.5" r="5.2" fill="#bfe0f7"/><path d="M8.3 3.8H5.2V9.2H8.3M5.2 6.5H7.8" fill="none" stroke="#5a5a5a" stroke-width="1.1"/></svg>
<svg class="abs" style="left:126.9px;top:338.8px" width="9" height="9" viewBox="0 0 9 9" ><path d="M1.2 3.6V2.4A2 2 0 0 1 5 2.1" fill="none" stroke="#7cc382" stroke-width="1.3"/><rect x="2.4" y="3.6" width="6.2" height="5.2" rx="0.6" fill="#7cc382"/><rect x="4.6" y="5.3" width="1.8" height="1.6" fill="#fff"/></svg>
<div class="tx" id="f28" style="left:141.2px;top:335.33px;color:#141414;letter-spacing:-0.261px;">Item</div>
<svg class="abs" style="left:110.4px;top:353.6px" width="13" height="13" viewBox="0 0 13 13" ><circle cx="6.5" cy="6.5" r="6.2" fill="#a9d3f1"/><circle cx="6.5" cy="6.5" r="5.2" fill="#bfe0f7"/><path d="M8.3 3.8H5.2V9.2H8.3M5.2 6.5H7.8" fill="none" stroke="#5a5a5a" stroke-width="1.1"/></svg>
<svg class="abs" style="left:126.9px;top:356.2px" width="9" height="9" viewBox="0 0 9 9" ><path d="M1.2 3.6V2.4A2 2 0 0 1 5 2.1" fill="none" stroke="#7cc382" stroke-width="1.3"/><rect x="2.4" y="3.6" width="6.2" height="5.2" rx="0.6" fill="#7cc382"/><rect x="4.6" y="5.3" width="1.8" height="1.6" fill="#fff"/></svg>
<div class="tx" id="f29" style="left:141.2px;top:352.70px;color:#141414;letter-spacing:-0.157px;">ItemType</div>
<svg class="abs" style="left:110.4px;top:370.9px" width="13" height="13" viewBox="0 0 13 13" ><circle cx="6.5" cy="6.5" r="6.2" fill="#a9d3f1"/><circle cx="6.5" cy="6.5" r="5.2" fill="#bfe0f7"/><path d="M8.3 5A2.5 2.6 0 1 0 8.3 8" fill="none" stroke="#5a5a5a" stroke-width="1.1"/></svg>
<svg class="abs" style="left:126.9px;top:373.5px" width="9" height="9" viewBox="0 0 9 9" ><path d="M1.2 3.6V2.4A2 2 0 0 1 5 2.1" fill="none" stroke="#7cc382" stroke-width="1.3"/><rect x="2.4" y="3.6" width="6.2" height="5.2" rx="0.6" fill="#7cc382"/><rect x="4.6" y="5.3" width="1.8" height="1.6" fill="#fff"/></svg>
<div class="tx" id="f30" style="left:141.2px;top:370.07px;color:#141414;letter-spacing:-0.498px;">Level</div>
<svg class="abs" style="left:110.4px;top:388.3px" width="13" height="13" viewBox="0 0 13 13" ><circle cx="6.5" cy="6.5" r="6.2" fill="#a9d3f1"/><circle cx="6.5" cy="6.5" r="5.2" fill="#bfe0f7"/><path d="M8.3 5A2.5 2.6 0 1 0 8.3 8" fill="none" stroke="#5a5a5a" stroke-width="1.1"/></svg>
<svg class="abs" style="left:126.9px;top:390.9px" width="9" height="9" viewBox="0 0 9 9" ><path d="M1.2 3.6V2.4A2 2 0 0 1 5 2.1" fill="none" stroke="#7cc382" stroke-width="1.3"/><rect x="2.4" y="3.6" width="6.2" height="5.2" rx="0.6" fill="#7cc382"/><rect x="4.6" y="5.3" width="1.8" height="1.6" fill="#fff"/></svg>
<div class="tx" id="f31" style="left:141.2px;top:387.44px;color:#141414;letter-spacing:-0.266px;">Monster</div>
<svg class="abs" style="left:110.4px;top:405.7px" width="13" height="13" viewBox="0 0 13 13" ><circle cx="6.5" cy="6.5" r="6.2" fill="#a9d3f1"/><circle cx="6.5" cy="6.5" r="5.2" fill="#bfe0f7"/><path d="M8.3 5A2.5 2.6 0 1 0 8.3 8" fill="none" stroke="#5a5a5a" stroke-width="1.1"/></svg>
<svg class="abs" style="left:126.9px;top:408.3px" width="9" height="9" viewBox="0 0 9 9" ><path d="M1.2 3.6V2.4A2 2 0 0 1 5 2.1" fill="none" stroke="#7cc382" stroke-width="1.3"/><rect x="2.4" y="3.6" width="6.2" height="5.2" rx="0.6" fill="#7cc382"/><rect x="4.6" y="5.3" width="1.8" height="1.6" fill="#fff"/></svg>
<div class="tx" id="f32" style="left:141.2px;top:404.81px;color:#141414;letter-spacing:-0.419px;">Player</div>
<svg class="abs" style="left:110.4px;top:423.0px" width="13" height="13" viewBox="0 0 13 13" ><circle cx="6.5" cy="6.5" r="6.2" fill="#a9d3f1"/><circle cx="6.5" cy="6.5" r="5.2" fill="#bfe0f7"/><path d="M8.3 5A2.5 2.6 0 1 0 8.3 8" fill="none" stroke="#5a5a5a" stroke-width="1.1"/></svg>
<svg class="abs" style="left:126.9px;top:425.6px" width="9" height="9" viewBox="0 0 9 9" ><path d="M1.2 3.6V2.4A2 2 0 0 1 5 2.1" fill="none" stroke="#7cc382" stroke-width="1.3"/><rect x="2.4" y="3.6" width="6.2" height="5.2" rx="0.6" fill="#7cc382"/><rect x="4.6" y="5.3" width="1.8" height="1.6" fill="#fff"/></svg>
<div class="tx" id="f33" style="left:141.2px;top:422.18px;color:#141414;letter-spacing:-0.600px;">Room</div>
<svg class="abs" style="left:74.2px;top:444.0px" width="9" height="8" viewBox="0 0 9 8" ><path d="M0 0.5H8.8L4.4 7.5z" fill="#7f7f7f"/></svg>
<svg class="abs" style="left:92.2px;top:441.4px" width="13" height="11" viewBox="0 0 13 11" ><path d="M0 0H6L7.1 1.8H13V10.8H0Z" fill="#d6aa6e"/><path d="M1.5 3.3H11.5V9.3H1.5Z" fill="#fff"/><circle cx="4.7" cy="6.3" r="1.7" fill="#7fb4dc"/></svg>
<div class="tx" id="f34" style="left:108.2px;top:439.55px;color:#141414;letter-spacing:-0.074px;">sprite</div>
<svg class="abs" style="left:110.4px;top:457.8px" width="13" height="13" viewBox="0 0 13 13" ><circle cx="6.5" cy="6.5" r="6.2" fill="#a9d3f1"/><circle cx="6.5" cy="6.5" r="5.2" fill="#bfe0f7"/><path d="M8.3 5A2.5 2.6 0 1 0 8.3 8" fill="none" stroke="#5a5a5a" stroke-width="1.1"/></svg>
<svg class="abs" style="left:126.9px;top:460.4px" width="9" height="9" viewBox="0 0 9 9" ><path d="M1.2 3.6V2.4A2 2 0 0 1 5 2.1" fill="none" stroke="#7cc382" stroke-width="1.3"/><rect x="2.4" y="3.6" width="6.2" height="5.2" rx="0.6" fill="#7cc382"/><rect x="4.6" y="5.3" width="1.8" height="1.6" fill="#fff"/></svg>
<div class="tx" id="f35" style="left:141.2px;top:456.92px;color:#141414;letter-spacing:-0.175px;">AnimatedSprite</div>
<svg class="abs" style="left:110.4px;top:475.1px" width="13" height="13" viewBox="0 0 13 13" ><circle cx="6.5" cy="6.5" r="6.2" fill="#a9d3f1"/><circle cx="6.5" cy="6.5" r="5.2" fill="#bfe0f7"/><path d="M8.3 5A2.5 2.6 0 1 0 8.3 8" fill="none" stroke="#5a5a5a" stroke-width="1.1"/></svg>
<svg class="abs" style="left:126.9px;top:477.7px" width="9" height="9" viewBox="0 0 9 9" ><path d="M1.2 3.6V2.4A2 2 0 0 1 5 2.1" fill="none" stroke="#7cc382" stroke-width="1.3"/><rect x="2.4" y="3.6" width="6.2" height="5.2" rx="0.6" fill="#7cc382"/><rect x="4.6" y="5.3" width="1.8" height="1.6" fill="#fff"/></svg>
<div class="tx" id="f36" style="left:141.2px;top:474.29px;color:#141414;letter-spacing:-0.255px;">Label</div>
<svg class="abs" style="left:110.4px;top:492.5px" width="13" height="13" viewBox="0 0 13 13" ><circle cx="6.5" cy="6.5" r="6.2" fill="#9fcdef"/><circle cx="6.5" cy="6.5" r="5.2" fill="#b4dbf6"/><path d="M6.5 6.5L0.6 4.2A6.3 6.3 0 0 1 6.5 0.3z" fill="#3bb54a"/><path d="M8.6 4.8A2.9 2.9 0 1 0 8.6 8.2" fill="none" stroke="#4d4d4d" stroke-width="1.3"/></svg>
<svg class="abs" style="left:126.9px;top:495.1px" width="9" height="9" viewBox="0 0 9 9" ><path d="M1.2 3.6V2.4A2 2 0 0 1 5 2.1" fill="none" stroke="#7cc382" stroke-width="1.3"/><rect x="2.4" y="3.6" width="6.2" height="5.2" rx="0.6" fill="#7cc382"/><rect x="4.6" y="5.3" width="1.8" height="1.6" fill="#fff"/></svg>
<div class="tx" id="f37" style="left:141.2px;top:491.66px;color:#141414;letter-spacing:-0.370px;">SObject</div>
<svg class="abs" style="left:110.4px;top:509.9px" width="13" height="13" viewBox="0 0 13 13" ><circle cx="6.5" cy="6.5" r="6.2" fill="#a9d3f1"/><circle cx="6.5" cy="6.5" r="5.2" fill="#bfe0f7"/><path d="M8.3 5A2.5 2.6 0 1 0 8.3 8" fill="none" stroke="#5a5a5a" stroke-width="1.1"/></svg>
<svg class="abs" style="left:126.9px;top:512.5px" width="9" height="9" viewBox="0 0 9 9" ><path d="M1.2 3.6V2.4A2 2 0 0 1 5 2.1" fill="none" stroke="#7cc382" stroke-width="1.3"/><rect x="2.4" y="3.6" width="6.2" height="5.2" rx="0.6" fill="#7cc382"/><rect x="4.6" y="5.3" width="1.8" height="1.6" fill="#fff"/></svg>
<div class="tx" id="f38" style="left:141.2px;top:509.03px;color:#141414;letter-spacing:-0.327px;">Sprite</div>
<svg class="abs" style="left:110.4px;top:527.2px" width="13" height="13" viewBox="0 0 13 13" ><circle cx="6.5" cy="6.5" r="6.2" fill="#a9d3f1"/><circle cx="6.5" cy="6.5" r="5.2" fill="#bfe0f7"/><path d="M8.3 5A2.5 2.6 0 1 0 8.3 8" fill="none" stroke="#5a5a5a" stroke-width="1.1"/></svg>
<svg class="abs" style="left:126.9px;top:529.9px" width="9" height="9" viewBox="0 0 9 9" ><path d="M1.2 3.6V2.4A2 2 0 0 1 5 2.1" fill="none" stroke="#7cc382" stroke-width="1.3"/><rect x="2.4" y="3.6" width="6.2" height="5.2" rx="0.6" fill="#7cc382"/><rect x="4.6" y="5.3" width="1.8" height="1.6" fill="#fff"/></svg>
<div class="tx" id="f39" style="left:141.2px;top:526.40px;color:#141414;letter-spacing:-0.410px;">SpriteEngine</div>
<svg class="abs" style="left:110.4px;top:544.6px" width="13" height="13" viewBox="0 0 13 13" ><circle cx="6.5" cy="6.5" r="6.2" fill="#a9d3f1"/><circle cx="6.5" cy="6.5" r="5.2" fill="#bfe0f7"/><path d="M8.3 5A2.5 2.6 0 1 0 8.3 8" fill="none" stroke="#5a5a5a" stroke-width="1.1"/></svg>
<svg class="abs" style="left:126.9px;top:547.2px" width="9" height="9" viewBox="0 0 9 9" ><path d="M1.2 3.6V2.4A2 2 0 0 1 5 2.1" fill="none" stroke="#7cc382" stroke-width="1.3"/><rect x="2.4" y="3.6" width="6.2" height="5.2" rx="0.6" fill="#7cc382"/><rect x="4.6" y="5.3" width="1.8" height="1.6" fill="#fff"/></svg>
<div class="tx" id="f40" style="left:141.2px;top:543.77px;color:#141414;letter-spacing:-0.152px;">Tween</div>
<svg class="abs" style="left:110.4px;top:562.0px" width="13" height="13" viewBox="0 0 13 13" ><circle cx="6.5" cy="6.5" r="6.2" fill="#94cc93"/><circle cx="6.5" cy="6.5" r="5.2" fill="#a9d8a8"/><path d="M5.2 3.8H7.8M6.5 3.8V9.2M5.2 9.2H7.8" fill="none" stroke="#3f5a3f" stroke-width="1.1"/></svg>
<svg class="abs" style="left:126.9px;top:564.6px" width="9" height="9" viewBox="0 0 9 9" ><path d="M1.2 3.6V2.4A2 2 0 0 1 5 2.1" fill="none" stroke="#7cc382" stroke-width="1.3"/><rect x="2.4" y="3.6" width="6.2" height="5.2" rx="0.6" fill="#7cc382"/><rect x="4.6" y="5.3" width="1.8" height="1.6" fill="#fff"/></svg>
<div class="tx" id="f41" style="left:141.2px;top:561.14px;color:#141414;letter-spacing:-0.203px;">TweenEndedListener</div>
<svg class="abs" style="left:74.2px;top:583.0px" width="9" height="8" viewBox="0 0 9 8" ><path d="M0 0.5H8.8L4.4 7.5z" fill="#7f7f7f"/></svg>
<svg class="abs" style="left:92.2px;top:580.4px" width="13" height="11" viewBox="0 0 13 11" ><path d="M0 0H6L7.1 1.8H13V10.8H0Z" fill="#d6aa6e"/><path d="M1.5 3.3H11.5V9.3H1.5Z" fill="#fff"/><circle cx="4.7" cy="6.3" r="1.7" fill="#7fb4dc"/></svg>
<div class="tx" id="f42" style="left:108.2px;top:578.51px;color:#141414;letter-spacing:-0.303px;">watchface</div>
<svg class="abs" style="left:110.4px;top:596.7px" width="13" height="13" viewBox="0 0 13 13" ><circle cx="6.5" cy="6.5" r="6.2" fill="#a9d3f1"/><circle cx="6.5" cy="6.5" r="5.2" fill="#bfe0f7"/><path d="M8.3 5A2.5 2.6 0 1 0 8.3 8" fill="none" stroke="#5a5a5a" stroke-width="1.1"/></svg>
<svg class="abs" style="left:126.9px;top:599.3px" width="9" height="9" viewBox="0 0 9 9" ><path d="M1.2 3.6V2.4A2 2 0 0 1 5 2.1" fill="none" stroke="#7cc382" stroke-width="1.3"/><rect x="2.4" y="3.6" width="6.2" height="5.2" rx="0.6" fill="#7cc382"/><rect x="4.6" y="5.3" width="1.8" height="1.6" fill="#fff"/></svg>
<div class="tx" id="f43" style="left:141.2px;top:595.88px;color:#141414;letter-spacing:-0.133px;">Controller</div>
<svg class="abs" style="left:110.4px;top:614.1px" width="13" height="13" viewBox="0 0 13 13" ><circle cx="6.5" cy="6.5" r="6.2" fill="#a9d3f1"/><circle cx="6.5" cy="6.5" r="5.2" fill="#bfe0f7"/><path d="M8.3 5A2.5 2.6 0 1 0 8.3 8" fill="none" stroke="#5a5a5a" stroke-width="1.1"/></svg>
<svg class="abs" style="left:126.9px;top:616.7px" width="9" height="9" viewBox="0 0 9 9" ><path d="M1.2 3.6V2.4A2 2 0 0 1 5 2.1" fill="none" stroke="#7cc382" stroke-width="1.3"/><rect x="2.4" y="3.6" width="6.2" height="5.2" rx="0.6" fill="#7cc382"/><rect x="4.6" y="5.3" width="1.8" height="1.6" fill="#fff"/></svg>
<div class="tx" id="f44" style="left:141.2px;top:613.25px;color:#141414;letter-spacing:-0.329px;">NonCachedView</div>
<svg class="abs" style="left:110.4px;top:631.5px" width="13" height="13" viewBox="0 0 13 13" ><circle cx="6.5" cy="6.5" r="6.2" fill="#a9d3f1"/><circle cx="6.5" cy="6.5" r="5.2" fill="#bfe0f7"/><path d="M8.3 5A2.5 2.6 0 1 0 8.3 8" fill="none" stroke="#5a5a5a" stroke-width="1.1"/></svg>
<svg class="abs" style="left:126.9px;top:634.1px" width="9" height="9" viewBox="0 0 9 9" ><path d="M1.2 3.6V2.4A2 2 0 0 1 5 2.1" fill="none" stroke="#7cc382" stroke-width="1.3"/><rect x="2.4" y="3.6" width="6.2" height="5.2" rx="0.6" fill="#7cc382"/><rect x="4.6" y="5.3" width="1.8" height="1.6" fill="#fff"/></svg>
<div class="tx" id="f45" style="left:141.2px;top:630.62px;color:#141414;letter-spacing:-0.349px;">View</div>
<div class="rbg" style="top:647.24px;background:#f2f9ec"></div>
<svg class="abs" style="left:56.3px;top:651.7px" width="8" height="9" viewBox="0 0 8 9" ><path d="M0.3 0.2V8.6L7.4 4.4z" fill="#7f7f7f"/></svg>
<svg class="abs" style="left:74.0px;top:649.8px" width="13" height="11" viewBox="0 0 13 11" ><path d="M0 0H6L7.1 1.8H13V10.8H0Z" fill="#d6aa6e"/><path d="M1.5 3.3H11.5V9.3H1.5Z" fill="#fff"/><circle cx="4.7" cy="6.3" r="1.7" fill="#7fb4dc"/></svg>
<div class="tx" id="f46" style="left:90.0px;top:647.99px;color:#141414;letter-spacing:0.008px;">co.slashware.roklib<span style="color:#9a9a9a"> (androidTest)</span></div>
<svg class="abs" style="left:38.1px;top:669.1px" width="8" height="9" viewBox="0 0 8 9" ><path d="M0.3 0.2V8.6L7.4 4.4z" fill="#7f7f7f"/></svg>
<svg class="abs" style="left:55.8px;top:667.2px" width="15" height="12" viewBox="0 0 15 12" ><path d="M0 0H6L7.1 1.8H13V10.8H0Z" fill="#d6aa6e"/><path d="M1.5 3.3H11.5V9.3H1.5Z" fill="#fff"/><rect x="6.4" y="3.5" width="8" height="8.5" fill="#fff"/><rect x="7.2" y="4.2" width="6.3" height="7.6" fill="#f0b52a"/><path d="M7.2 6.7H13.5M7.2 9.2H13.5" stroke="#fde9b0" stroke-width="0.8"/><path d="M10.35 4.2V11.8" stroke="#fde9b0" stroke-width="0.7"/></svg>
<div class="tx" id="f47" style="left:71.8px;top:665.36px;color:#141414;letter-spacing:-0.257px;">res</div>
<svg class="abs" style="left:19.6px;top:687.2px" width="9" height="8" viewBox="0 0 9 8" ><path d="M0 0.5H8.8L4.4 7.5z" fill="#7f7f7f"/></svg>
<svg class="abs" style="left:37.6px;top:684.6px" width="15" height="12" viewBox="0 0 15 12" ><path d="M0 0H6L7.1 1.8H13V10.8H0Z" fill="#d6aa6e"/><path d="M1.5 3.3H11.5V9.3H1.5Z" fill="#fff"/><rect x="7.8" y="5.3" width="7" height="6.7" fill="#fff"/><rect x="8.6" y="6" width="5.2" height="5.5" fill="#79b0dc"/></svg>
<div class="tx" id="f48" style="left:53.6px;top:682.73px;color:#141414;font-weight:bold;letter-spacing:-0.290px;">wear</div>
<svg class="abs" style="left:38.1px;top:703.9px" width="8" height="9" viewBox="0 0 8 9" ><path d="M0.3 0.2V8.6L7.4 4.4z" fill="#7f7f7f"/></svg>
<svg class="abs" style="left:55.8px;top:702.0px" width="13" height="11" viewBox="0 0 13 11" ><path d="M0 0H6L7.1 1.8H13V10.8H0Z" fill="#7db4de"/><path d="M1.5 3.3H11.5V9.3H1.5Z" fill="#fff"/></svg>
<div class="tx" id="f49" style="left:71.8px;top:700.10px;color:#141414;letter-spacing:-0.207px;">manifests</div>
<svg class="abs" style="left:37.8px;top:721.9px" width="9" height="8" viewBox="0 0 9 8" ><path d="M0 0.5H8.8L4.4 7.5z" fill="#7f7f7f"/></svg>
<svg class="abs" style="left:55.8px;top:719.3px" width="13" height="11" viewBox="0 0 13 11" ><path d="M0 0H6L7.1 1.8H13V10.8H0Z" fill="#7db4de"/><path d="M1.5 3.3H11.5V9.3H1.5Z" fill="#fff"/></svg>
<div class="tx" id="f50" style="left:71.8px;top:717.47px;color:#141414;letter-spacing:-0.229px;">java</div>
<svg class="abs" style="left:56.0px;top:739.3px" width="9" height="8" viewBox="0 0 9 8" ><path d="M0 0.5H8.8L4.4 7.5z" fill="#7f7f7f"/></svg>
<svg class="abs" style="left:74.0px;top:736.7px" width="13" height="11" viewBox="0 0 13 11" ><path d="M0 0H6L7.1 1.8H13V10.8H0Z" fill="#d6aa6e"/><path d="M1.5 3.3H11.5V9.3H1.5Z" fill="#fff"/><circle cx="4.7" cy="6.3" r="1.7" fill="#7fb4dc"/></svg>
<div class="tx" id="f51" style="left:90.0px;top:734.84px;color:#141414;letter-spacing:-0.097px;">co.slashware.rok</div>
<svg class="abs" style="left:92.2px;top:753.1px" width="13" height="13" viewBox="0 0 13 13" ><circle cx="6.5" cy="6.5" r="6.2" fill="#a9d3f1"/><circle cx="6.5" cy="6.5" r="5.2" fill="#bfe0f7"/><path d="M8.3 5A2.5 2.6 0 1 0 8.3 8" fill="none" stroke="#5a5a5a" stroke-width="1.1"/></svg>
<svg class="abs" style="left:108.7px;top:755.7px" width="9" height="9" viewBox="0 0 9 9" ><path d="M1.2 3.6V2.4A2 2 0 0 1 5 2.1" fill="none" stroke="#7cc382" stroke-width="1.3"/><rect x="2.4" y="3.6" width="6.2" height="5.2" rx="0.6" fill="#7cc382"/><rect x="4.6" y="5.3" width="1.8" height="1.6" fill="#fff"/></svg>
<div class="tx" id="f52" style="left:123.0px;top:752.21px;color:#141414;letter-spacing:-0.600px;">WatchFaceService</div>
<svg class="abs" style="left:37.8px;top:774.0px" width="9" height="8" viewBox="0 0 9 8" ><path d="M0 0.5H8.8L4.4 7.5z" fill="#7f7f7f"/></svg>
<svg class="abs" style="left:55.8px;top:771.4px" width="15" height="12" viewBox="0 0 15 12" ><path d="M0 0H6L7.1 1.8H13V10.8H0Z" fill="#d6aa6e"/><path d="M1.5 3.3H11.5V9.3H1.5Z" fill="#fff"/><rect x="6.4" y="3.5" width="8" height="8.5" fill="#fff"/><rect x="7.2" y="4.2" width="6.3" height="7.6" fill="#f0b52a"/><path d="M7.2 6.7H13.5M7.2 9.2H13.5" stroke="#fde9b0" stroke-width="0.8"/><path d="M10.35 4.2V11.8" stroke="#fde9b0" stroke-width="0.7"/></svg>
<div class="tx" id="f53" style="left:71.8px;top:769.58px;color:#141414;letter-spacing:-0.257px;">res</div>
<div id="vscroll" class="abs"></div><div id="thumb" class="abs"></div>
<div id="sepline" class="abs"></div>
<div id="editor" class="abs"></div>
<div class="abs" style="left:299px;top:70px;width:841px;height:21px;background:#d4d4d4;border-bottom:1px solid #b3b3b3"></div>
<div class="abs" style="left:299px;top:70px;width:145px;height:21px;background:#d8d8d8;border-right:1px solid #a9a9a9;border-bottom:1px solid #b3b3b3"></div>
<div class="abs" style="left:444px;top:70px;width:126.5px;height:24px;background:#fff;border-right:1px solid #a9a9a9"></div>
<div class="abs" style="left:299px;top:94px;width:841px;height:1px;background:#d2d2d2"></div>
<svg class="abs" style="left:308.8px;top:74px" width="13" height="13" viewBox="0 0 13 13" ><circle cx="6.5" cy="6.5" r="6.2" fill="#a9d3f1"/><circle cx="6.5" cy="6.5" r="5.2" fill="#bfe0f7"/><path d="M8.3 5A2.5 2.6 0 1 0 8.3 8" fill="none" stroke="#5a5a5a" stroke-width="1.1"/></svg>
<div class="abs" id="f54" style="left:325.4px;top:70px;height:21px;line-height:21px;font-size:11px;color:#222;white-space:nowrap;-webkit-text-stroke:0.15px currentColor;letter-spacing:-0.410px;">MainGamePanel.java</div>
<svg class="abs" style="left:428.8px;top:77.5px" width="7" height="7" viewBox="0 0 7 7" ><path d="M0.6 0.6L6.4 6.4M6.4 0.6L0.6 6.4" stroke="#8c8c8c" stroke-width="1.3"/></svg>
<svg class="abs" style="left:454px;top:74px" width="13" height="13" viewBox="0 0 13 13" ><circle cx="6.5" cy="6.5" r="6.2" fill="#a9d3f1"/><circle cx="6.5" cy="6.5" r="5.2" fill="#bfe0f7"/><path d="M8.3 5A2.5 2.6 0 1 0 8.3 8" fill="none" stroke="#5a5a5a" stroke-width="1.1"/></svg>
<div class="abs" id="f55" style="left:470.6px;top:70px;height:21px;line-height:21px;font-size:11px;color:#111;white-space:nowrap;-webkit-text-stroke:0.15px currentColor;letter-spacing:-0.149px;">MainThread.java</div>
<svg class="abs" style="left:556px;top:77.5px" width="7" height="7" viewBox="0 0 7 7" ><path d="M0.6 0.6L6.4 6.4M6.4 0.6L0.6 6.4" stroke="#8c8c8c" stroke-width="1.3"/></svg>
<div id="gutter" class="abs"></div>
<div class="abs" style="left:299px;top:245.89px;width:841px;height:13.4px;background:#fffae6"></div>
<div class="abs" style="left:965px;top:95px;width:2px;height:686px;background:#f0f0f0"></div>
<div class="ig" style="left:353.4px;top:95.0px;height:575.2px"></div>
<div class="ig" style="left:379.0px;top:95.0px;height:561.5px"></div>
<div class="ig" style="left:404.7px;top:136.3px;height:424.4px"></div>
<div class="ig" style="left:404.7px;top:574.4px;height:68.5px"></div>
<div class="ig" style="left:430.3px;top:163.7px;height:383.3px"></div>
<div class="ig" style="left:455.9px;top:245.8px;height:13.7px"></div>
<div class="ig" style="left:455.9px;top:328.0px;height:82.1px"></div>
<div class="ig" style="left:481.5px;top:355.4px;height:41.1px"></div>
<div class="ig" style="left:455.9px;top:451.2px;height:82.1px"></div>
<div class="ig" style="left:430.3px;top:615.5px;height:13.7px"></div>
<svg class="abs" style="left:316.6px;top:359.7px" width="9" height="10" viewBox="0 0 9 10" ><path d="M0.6 0.6H8.2V5.6L4.4 9.2L0.6 5.6Z" fill="#fff" stroke="#d3d3d3" stroke-width="1"/><path d="M2.6 3.4H6.2" stroke="#d8d8d8" stroke-width="0.8"/></svg>
<svg class="abs" style="left:316.6px;top:372.4px" width="9" height="10" viewBox="0 0 9 10" ><path d="M0.6 9.2H8.2V4.2L4.4 0.6L0.6 4.2Z" fill="#fff" stroke="#d3d3d3" stroke-width="1"/><path d="M2.6 6.4H6.2" stroke="#d8d8d8" stroke-width="0.8"/></svg>
<svg class="abs" style="left:316.6px;top:455.5px" width="9" height="10" viewBox="0 0 9 10" ><path d="M0.6 0.6H8.2V5.6L4.4 9.2L0.6 5.6Z" fill="#fff" stroke="#d3d3d3" stroke-width="1"/><path d="M2.6 3.4H6.2" stroke="#d8d8d8" stroke-width="0.8"/></svg>
<svg class="abs" style="left:316.6px;top:468.2px" width="9" height="10" viewBox="0 0 9 10" ><path d="M0.6 9.2H8.2V4.2L4.4 0.6L0.6 4.2Z" fill="#fff" stroke="#d3d3d3" stroke-width="1"/><path d="M2.6 6.4H6.2" stroke="#d8d8d8" stroke-width="0.8"/></svg>
<svg class="abs" style="left:316.6px;top:578.7px" width="9" height="10" viewBox="0 0 9 10" ><path d="M0.6 0.6H8.2V5.6L4.4 9.2L0.6 5.6Z" fill="#fff" stroke="#d3d3d3" stroke-width="1"/><path d="M2.6 3.4H6.2" stroke="#d8d8d8" stroke-width="0.8"/></svg>
<svg class="abs" style="left:316.6px;top:591.4px" width="9" height="10" viewBox="0 0 9 10" ><path d="M0.6 9.2H8.2V4.2L4.4 0.6L0.6 4.2Z" fill="#fff" stroke="#d3d3d3" stroke-width="1"/><path d="M2.6 6.4H6.2" stroke="#d8d8d8" stroke-width="0.8"/></svg>
<svg class="abs" style="left:316.6px;top:673.5px" width="9" height="10" viewBox="0 0 9 10" ><path d="M0.6 9.2H8.2V4.2L4.4 0.6L0.6 4.2Z" fill="#fff" stroke="#d3d3d3" stroke-width="1"/><path d="M2.6 6.4H6.2" stroke="#d8d8d8" stroke-width="0.8"/></svg>
<div class="cl" style="top:96.75px">            canvas = <span class="k">null</span>;</div>
<div class="cl" style="top:110.44px">            <span class="c">// try locking the canvas for exclusive pixel editing on the surface</span></div>
<div class="cl" style="top:124.13px">            <span class="k">try</span> {</div>
<div class="cl" style="top:137.82px">                canvas = <span class="k">this</span>.<span class="f">surfaceHolder</span>.lockCanvas();</div>
<div class="cl" style="top:151.51px">                <span class="k">synchronized</span> (<span class="f hl">surfaceHolder</span>) {</div>
<div class="cl" style="top:165.20px">                    beginTime = System.<span class="i">currentTimeMillis</span>();</div>
<div class="cl" style="top:178.89px">                    framesSkipped = <span class="n">0</span>;  <span class="c">// resetting the frames skipped</span></div>
<div class="cl" style="top:192.58px">                    <span class="c">// update game state</span></div>
<div class="cl" style="top:206.27px">                    <span class="k">this</span>.<span class="f">gamePanel</span>.update();</div>
<div class="cl" style="top:219.96px">                    <span class="c">// draws the canvas on the panel</span></div>
<div class="cl" style="top:233.65px">                    <span class="k">if</span> (canvas != <span class="k">null</span>)</div>
<div class="cl" style="top:247.34px">                        <span class="k">this</span>.<span class="f">gamePanel</span>.render(canvas);</div>
<div class="cl" style="top:261.03px">                    timeDiff = System.<span class="i">currentTimeMillis</span>() - beginTime;</div>
<div class="cl" style="top:274.72px">                    <span class="c">// calculate sleep time</span></div>
<div class="cl" style="top:288.41px">                    sleepTime = (<span class="k">int</span>)(<span class="sf">FRAME_PERIOD</span> - timeDiff);</div>
<div class="cl" style="top:302.10px"></div>
<div class="cl" style="top:315.79px">                    <span class="k">if</span> (sleepTime &gt; <span class="n">0</span>) {</div>
<div class="cl" style="top:329.48px">                        <span class="c">// if sleepTime &gt; 0 we&#x27;re OK</span></div>
<div class="cl" style="top:343.17px">                        <span class="k">try</span> {</div>
<div class="cl" style="top:356.86px">                            <span class="c">// send the thread to sleep for a short period</span></div>
<div class="cl" style="top:370.55px">                            <span class="c">// very useful for battery saving</span></div>
<div class="cl" style="top:384.24px">                            Thread.<span class="i">sleep</span>(sleepTime);</div>
<div class="cl" style="top:397.93px">                        } <span class="k hl">catch</span> (InterruptedException e) {}</div>
<div class="cl" style="top:411.62px">                    }</div>
<div class="cl" style="top:425.31px"></div>
<div class="cl" style="top:439.00px">                    <span class="k">while</span> (sleepTime &lt; <span class="n">0</span> &amp;&amp; framesSkipped &lt; <span class="sf">MAX_FRAME_SKIPS</span>) {</div>
<div class="cl" style="top:452.69px">                        <span class="c">// we need to catch up</span></div>
<div class="cl" style="top:466.38px">                        <span class="c">// update without rendering</span></div>
<div class="cl" style="top:480.07px">                        <span class="k">this</span>.<span class="f">gamePanel</span>.update();</div>
<div class="cl" style="top:493.76px">                        <span class="c">// add frame period to check if in next frame</span></div>
<div class="cl" style="top:507.45px">                        sleepTime += <span class="sf">FRAME_PERIOD</span>;</div>
<div class="cl" style="top:521.14px">                        framesSkipped++;</div>
<div class="cl" style="top:534.83px">                    }</div>
<div class="cl" style="top:548.52px">                }</div>
<div class="cl" style="top:562.21px">            } <span class="k">finally</span> {</div>
<div class="cl" style="top:575.90px">                <span class="c">// in case of an exception the surface is not left in</span></div>
<div class="cl" style="top:589.59px">                <span class="c">// an inconsistent state</span></div>
<div class="cl" style="top:603.28px">                <span class="k">if</span> (canvas != <span class="k">null</span>) {</div>
<div class="cl" style="top:616.97px">                    <span class="f">surfaceHolder</span>.unlockCanvasAndPost(canvas);</div>
<div class="cl" style="top:630.66px">                }</div>
<div class="cl" style="top:644.35px">            } <span class="c">// end finally</span></div>
<div class="cl" style="top:658.04px">        }</div>
<div class="cl" style="top:671.73px">    }</div>
<div class="cl" style="top:685.42px">}</div>
<div class="abs" style="left:0;top:780px;width:1140px;height:1px;background:#ababab"></div>
</body></html>
